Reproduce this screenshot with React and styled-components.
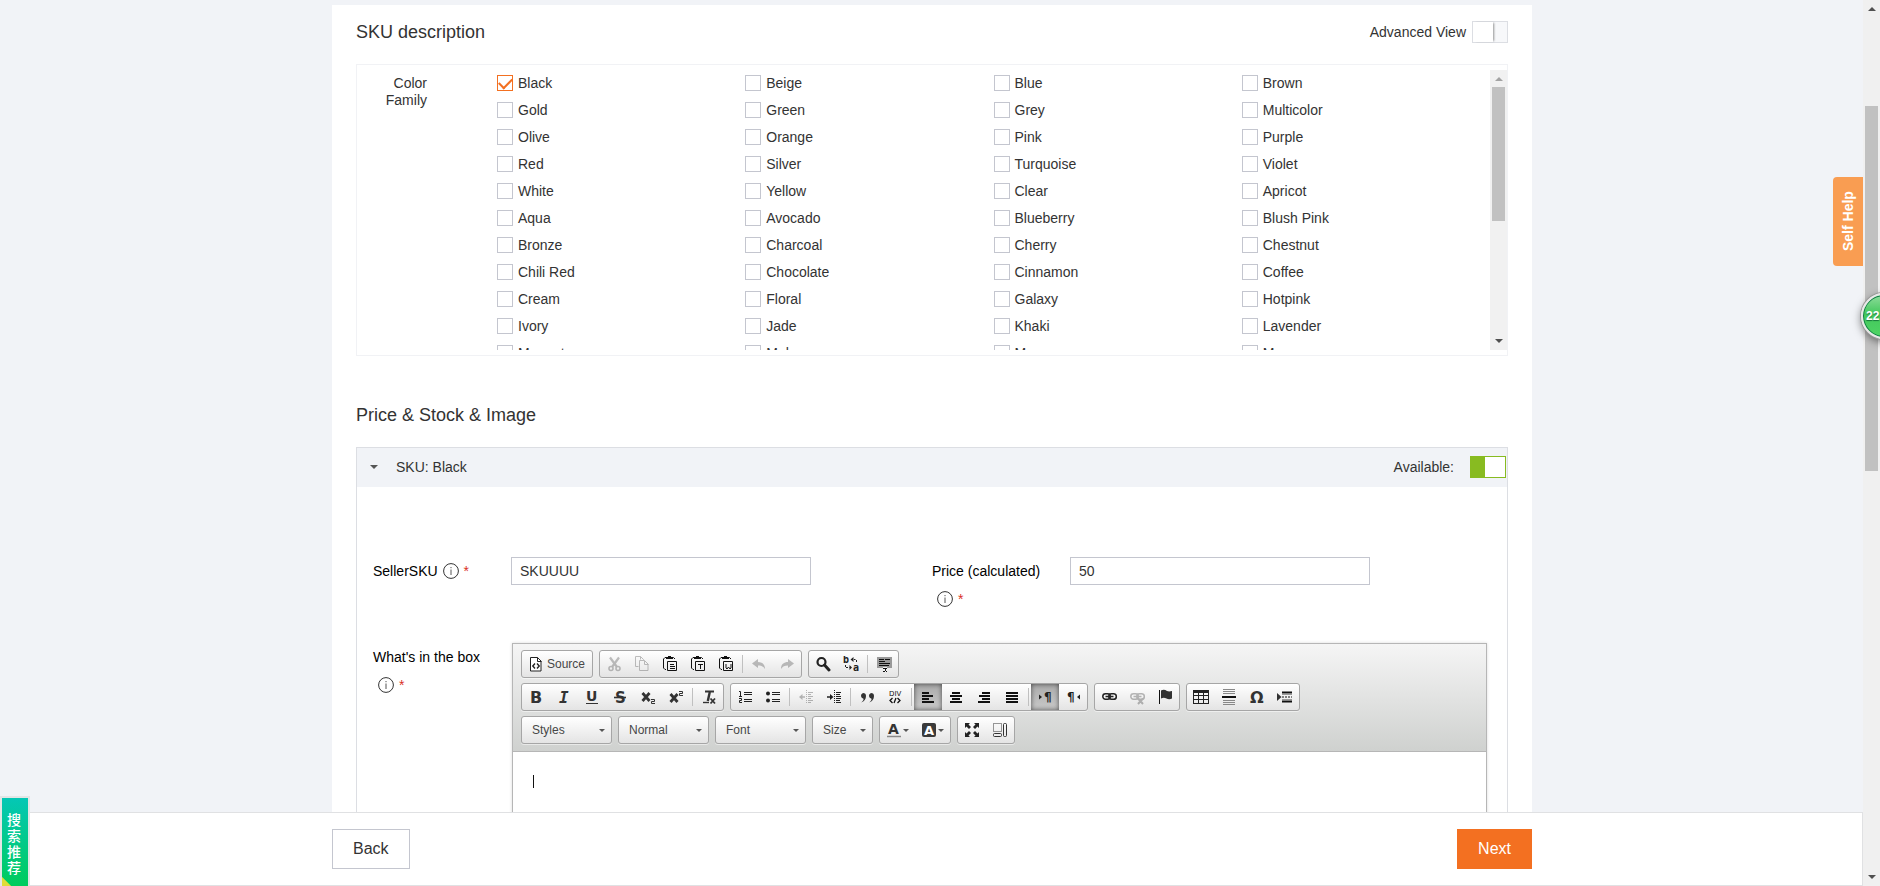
import React, { useState } from 'react';
import styled, { createGlobalStyle, css } from 'styled-components';

const colors = [
  'Black', 'Beige', 'Blue', 'Brown',
  'Gold', 'Green', 'Grey', 'Multicolor',
  'Olive', 'Orange', 'Pink', 'Purple',
  'Red', 'Silver', 'Turquoise', 'Violet',
  'White', 'Yellow', 'Clear', 'Apricot',
  'Aqua', 'Avocado', 'Blueberry', 'Blush Pink',
  'Bronze', 'Charcoal', 'Cherry', 'Chestnut',
  'Chili Red', 'Chocolate', 'Cinnamon', 'Coffee',
  'Cream', 'Floral', 'Galaxy', 'Hotpink',
  'Ivory', 'Jade', 'Khaki', 'Lavender',
  'Magenta', 'Mahogany', 'Mango', 'Maroon'
];

const sans = "'DejaVu Sans', sans-serif";
const mono = "'DejaVu Sans Mono', monospace";
const ink = '#333';

// 16 x 16 toolbar drawings
const icons = {
  source: (
    <>
      <path d="M2.500 1.500h7l3.500 3.500v10h-10.500v-13z" fill="#fff" stroke="#222" />
      <path d="M9.500 1.500v4h4" fill="none" stroke="#222" />
      <path d="M7 7.500 4.800 10 7 12.500M9 7.500 11.200 10 9 12.500" fill="none" stroke="#222" strokeWidth="1.400" />
    </>
  ),
  cut: (
    <g fill="none" stroke={ink}>
      <path d="M4 1.500 11 11M13 1.500 6 11" strokeWidth="2.200" />
      <circle cx="5" cy="12.500" r="2" strokeWidth="1.600" />
      <circle cx="12" cy="12.500" r="2" strokeWidth="1.600" />
    </g>
  ),
  copy: (
    <g fill="none" stroke={ink}>
      <path d="M4.500 10.500h-3v-10h5l3 3v1" />
      <path d="M5.500 4.500h5l3.500 3.500v6.500h-8.500z" />
      <path d="M10.500 4.500v4h4M6.500 .5v3" />
    </g>
  ),
  paste: (
    <>
      <Clipboard />
      <path d="M8 8.500h4M8 10.500h5M8 12.500h5" stroke="#111" />
    </>
  ),
  pasteText: (
    <>
      <Clipboard />
      <path d="M8 8.500h5M10.500 8v5" stroke="#111" />
    </>
  ),
  pasteWord: (
    <>
      <Clipboard />
      <path d="M8 8v4l1 1 1.500-2 1.500 2 1-1V8" stroke="#111" fill="none" />
    </>
  ),
  undo: <path d="M7 3v3c4 0 7 2 7 7-1.500-2.500-3.500-3.500-7-3.500V12L1 7.500z" fill={ink} />,
  redo: <path d="M9 3v3c-4 0-7 2-7 7 1.500-2.500 3.500-3.500 7-3.500V12l6-4.500z" fill={ink} />,
  find: (
    <g fill="none" stroke="#222">
      <circle cx="6.500" cy="6" r="4" strokeWidth="2.200" />
      <path d="m9.500 9 4.500 5" strokeWidth="3" strokeLinecap="round" />
    </g>
  ),
  replace: (
    <>
      <text x="0" y="7" fontFamily={mono} fontWeight="bold" fontSize="10" fill="#222">b</text>
      <text x="10" y="15" fontFamily={mono} fontWeight="bold" fontSize="10" fill="#222">a</text>
      <path d="M8 3.500h4.500M13.500 4v3M2.500 9v2.500h4" fill="none" stroke="#222" strokeDasharray="2 1" />
      <path d="m7.500 3.500 3-2.500v5zM9 11.500 6.500 9v5z" fill="#222" />
    </>
  ),
  selectAll: (
    <g shapeRendering="crispEdges">
      <path d="M1 1h15v11H1z" fill="#999" />
      <path d="M3 3h5M9 3h5M3 5h6M3 7h11M3 9h10" stroke="#111" transform="translate(0 .5)" />
      <path d="M7 11h4v5H7z" fill="#eee" />
      <path d="M7 12.500h1.500M9.500 12.500h1.500M9 12v3M7 15.500h1.500M9.500 15.500h1.500" stroke="#111" />
    </g>
  ),
  bold: <text x="2" y="14" fontFamily={sans} fontWeight="bold" fontSize="16" fill={ink}>B</text>,
  italic: <text x="3" y="14" fontFamily={mono} fontWeight="bold" fontStyle="italic" fontSize="16" fill={ink}>I</text>,
  underline: (
    <>
      <text x="2" y="12" fontFamily={sans} fontWeight="bold" fontSize="14" fill={ink}>U</text>
      <path d="M2 14.500h12" stroke={ink} />
    </>
  ),
  strike: (
    <>
      <text x="3" y="14" fontFamily={sans} fontWeight="bold" fontSize="15" fill={ink}>S</text>
      <path d="M2 8.500h12" stroke={ink} strokeWidth="1.600" />
    </>
  ),
  sub: (
    <>
      <path d="m2.500 4 7 8M9.500 4l-7 8" stroke={ink} strokeWidth="2.800" />
      <path d="M11 10.500h3.500v2h-3v2H15" fill="none" stroke={ink} />
    </>
  ),
  sup: (
    <>
      <path d="m2.500 5 7 8M9.500 5l-7 8" stroke={ink} strokeWidth="2.800" />
      <path d="M11 2.500h3.500v2h-3v2H15" fill="none" stroke={ink} />
    </>
  ),
  removeFormat: (
    <>
      <path d="M4 2.500h9" stroke={ink} strokeWidth="2" />
      <path d="m8.800 3-2 9" stroke={ink} strokeWidth="2.400" />
      <path d="M2 13.500h6" stroke={ink} strokeWidth="1.400" />
      <path d="m9.500 9.500 4.500 5M14 9.500l-4.500 5" stroke={ink} strokeWidth="1.800" />
    </>
  ),
  ordered: (
    <g stroke="#222" fill="none">
      <path d="M7 3.500h8M7 5.500h8M7 10.500h8M7 12.500h8" />
      <path d="M2 2.500h1.500V7M2 7.500h3M2 9.500h2.500v2h-2v2H5" />
    </g>
  ),
  bullets: (
    <>
      <path d="M7 3.500h8M7 5.500h8M7 10.500h8M7 12.500h8" stroke="#222" />
      <circle cx="3" cy="4.500" r="2" fill="#222" />
      <circle cx="3" cy="11.500" r="2" fill="#222" />
    </>
  ),
  outdent: (
    <>
      <path d="M8.500 1v14" stroke="#222" strokeDasharray="1 1" />
      <path d="M10 3.500h5M10 5.500h3M10 7.500h5M10 9.500h3M10 11.500h5M10 13.500h3" stroke="#222" />
      <path d="M3 8h4" stroke="#222" strokeWidth="1.500" />
      <path d="M1 8l3.500-3v6z" fill="#222" />
    </>
  ),
  indent: (
    <>
      <path d="M8.500 1v14" stroke="#222" strokeDasharray="1 1" />
      <path d="M10 3.500h5M10 5.500h4M10 7.500h5M10 9.500h5M10 11.500h4M10 13.500h5" stroke="#222" />
      <path d="M1 8h4" stroke="#222" strokeWidth="1.500" />
      <path d="M7.500 8 4 5v6z" fill="#222" />
    </>
  ),
  quote: (
    <g fill={ink}>
      <path d="M4 4a3 3 0 0 1 3 3c0 3.300-1.700 5.500-4.800 6.500C4 12 4.700 11 4.500 9.800A3 3 0 0 1 4 4z" />
      <path d="M12 4a3 3 0 0 1 3 3c0 3.300-1.700 5.500-4.800 6.500 1.800-1.500 2.500-2.500 2.300-3.700A3 3 0 0 1 12 4z" />
    </g>
  ),
  div: (
    <>
      <text x="2" y="7" fontFamily={sans} fontSize="7" fill="#111">DIV</text>
      <path d="M5.500 9 3 11.500 5.500 14M10.500 9l2.500 2.500-2.500 2.500M9 9l-2 5" fill="none" stroke="#111" strokeWidth="1.300" />
    </>
  ),
  left: <path d="M2 3h7M2 6h11M2 9h7M2 12h12" stroke="#111" strokeWidth="2" transform="translate(0 1)" />,
  center: <path d="M4 3h8M2 6h12M4 9h8M2 12h12" stroke="#111" strokeWidth="2" transform="translate(0 1)" />,
  right: <path d="M6 3h8M3 6h11M6 9h8M2 12h12" stroke="#111" strokeWidth="2" transform="translate(0 1)" />,
  justify: <path d="M2 3h12M2 6h12M2 9h12M2 12h12" stroke="#111" strokeWidth="2" transform="translate(0 1)" />,
  ltr: (
    <>
      <path d="m2 5.500 3 2.500-3 2.500z" fill="#222" />
      <text x="7" y="12" fontFamily={sans} fontWeight="bold" fontSize="12" fill="#222">¶</text>
    </>
  ),
  rtl: (
    <>
      <text x="2" y="12" fontFamily={sans} fontWeight="bold" fontSize="12" fill="#222">¶</text>
      <path d="M15 5.500 12 8l3 2.500z" fill="#222" />
    </>
  ),
  link: <Chain />,
  unlink: (
    <>
      <Chain />
      <path d="m9 9.500 5 5.500M14 9.500l-5 5.500" stroke="#222" strokeWidth="2" />
    </>
  ),
  flag: (
    <>
      <path d="M2.500 1v14" stroke="#111" />
      <path d="M4 1.500c2-1 4-1 6 .5 1.500.6 3 .5 5 0v7.500c-2 1-4 .8-5.500 0-2-1-3.500-1-5.500 0z" fill={ink} />
    </>
  ),
  table: (
    <g shapeRendering="crispEdges">
      <path d="M0 1h16v3H0z" fill="#222" />
      <path d="M.5 3v11.500h15V3M5.500 4v10M10.500 4v10M1 6.500h15M1 10.500h15" fill="none" stroke="#222" />
    </g>
  ),
  rule: (
    <>
      <path d="M2 .5h12M2 2.500h12M2 4.500h12M2 11.500h12M2 13.500h12M2 15.500h12" stroke="#888" />
      <path d="M1 8h14" stroke="#111" strokeWidth="2" />
    </>
  ),
  omega: <text x="1" y="14" fontFamily={sans} fontWeight="bold" fontSize="16" fill="#333">Ω</text>,
  pageBreak: (
    <>
      <path d="m0 4 4.500 4L0 12z" fill={ink} />
      <path d="M5 3.500h10M5 12.500h10" stroke="#111" strokeWidth="2" />
      <path d="M5 5.500h10M5 10.500h10" stroke="#999" />
      <path d="M5 8h10" stroke="#111" strokeDasharray="2 1" />
    </>
  ),
  textColor: (
    <>
      <text x="2" y="12" fontFamily={sans} fontWeight="bold" fontSize="14" fill="#333">A</text>
      <path d="M1 14.500h14" stroke="#888" strokeWidth="1.500" />
    </>
  ),
  bgColor: (
    <>
      <rect x="1" y="1" width="14" height="14" rx="2" fill="#3a3a3a" />
      <text x="3" y="13" fontFamily={sans} fontWeight="bold" fontSize="13" fill="#fff">A</text>
    </>
  ),
  maximize: (
    <g fill="#222">
      <path d="M1 1h5L4.500 2.500l2.500 2.500-2 2-2.500-2.500L1 6zM15 1h-5l1.500 1.500L9 5l2 2 2.500-2.500L15 6zM1 15h5l-1.500-1.500L7 11 5 9l-2.500 2.500L1 10zM15 15h-5l1.500-1.500L9 11l2-2 2.500 2.500L15 10z" />
    </g>
  ),
  blocks: (
    <g fill="none" stroke="#333">
      <path d="M1.500 1.500h8v8h-8z" strokeDasharray="1 1" />
      <rect x="1.500" y="11.500" width="8" height="3" rx="1" />
      <rect x="11.500" y="1.500" width="3" height="13" rx="1" />
    </g>
  )
};

function Clipboard() {
  return (
    <g fill="none" stroke="#111">
      <path d="M4 1.500H3L1.500 3v9L3 13.500h1M10 1.500h1.500L13 3" />
      <path d="M4 2h7" strokeWidth="2" />
      <path d="M6 .5h3M5.500 5.500h9v9h-9z" />
    </g>
  );
}

function Chain() {
  return (
    <g fill="none" stroke="#222">
      <rect x="1.800" y="4.800" width="7.500" height="5.500" rx="2.700" strokeWidth="1.500" />
      <rect x="7.800" y="4.800" width="7.500" height="5.500" rx="2.700" strokeWidth="1.500" />
      <path d="M4.500 7.500h8" strokeWidth="1.500" />
    </g>
  );
}

const rowOne = [
  [{ icon: 'source', name: 'Source', text: 'Source' }],
  [
    { icon: 'cut', name: 'Cut', off: true },
    { icon: 'copy', name: 'Copy', off: true },
    { icon: 'paste', name: 'Paste' },
    { icon: 'pasteText', name: 'Paste as plain text' },
    { icon: 'pasteWord', name: 'Paste from Word' },
    null,
    { icon: 'undo', name: 'Undo', off: true },
    { icon: 'redo', name: 'Redo', off: true }
  ],
  [
    { icon: 'find', name: 'Find' },
    { icon: 'replace', name: 'Replace' },
    null,
    { icon: 'selectAll', name: 'Select All' }
  ]
];

const rowTwo = [
  [
    { icon: 'bold', name: 'Bold' },
    { icon: 'italic', name: 'Italic' },
    { icon: 'underline', name: 'Underline' },
    { icon: 'strike', name: 'Strikethrough' },
    { icon: 'sub', name: 'Subscript' },
    { icon: 'sup', name: 'Superscript' },
    null,
    { icon: 'removeFormat', name: 'Remove Format' }
  ],
  [
    { icon: 'ordered', name: 'Numbered List' },
    { icon: 'bullets', name: 'Bulleted List' },
    null,
    { icon: 'outdent', name: 'Decrease Indent', off: true },
    { icon: 'indent', name: 'Increase Indent' },
    null,
    { icon: 'quote', name: 'Block Quote' },
    { icon: 'div', name: 'Create Div Container' },
    null,
    { icon: 'left', name: 'Align Left', on: true },
    { icon: 'center', name: 'Center' },
    { icon: 'right', name: 'Align Right' },
    { icon: 'justify', name: 'Justify' },
    null,
    { icon: 'ltr', name: 'Left to right', on: true },
    { icon: 'rtl', name: 'Right to left' }
  ],
  [
    { icon: 'link', name: 'Link' },
    { icon: 'unlink', name: 'Unlink', off: true },
    { icon: 'flag', name: 'Anchor' }
  ],
  [
    { icon: 'table', name: 'Table' },
    { icon: 'rule', name: 'Horizontal Line' },
    { icon: 'omega', name: 'Special Character' },
    { icon: 'pageBreak', name: 'Page Break' }
  ]
];

const rowThree = [
  [
    { icon: 'textColor', name: 'Text Color', menu: true },
    { icon: 'bgColor', name: 'Background Color', menu: true }
  ],
  [
    { icon: 'maximize', name: 'Maximize' },
    { icon: 'blocks', name: 'Show Blocks' }
  ]
];

const Tools = ({ groups }) =>
  groups.map((group, i) => (
    <ToolGroup key={i}>
      {group.map((tool, j) =>
        tool ? (
          <ToolButton key={tool.name} type="button" aria-label={tool.name} disabled={tool.off} $on={tool.on}>
            <svg width="16" height="16" viewBox="0 0 16 16" aria-hidden="true">{icons[tool.icon]}</svg>
            {tool.text && <span>{tool.text}</span>}
            {tool.menu && <Caret $size={3} />}
          </ToolButton>
        ) : (
          <Separator key={j} />
        )
      )}
    </ToolGroup>
  ));

const Combo = ({ label, short }) => (
  <ComboBox $short={short}>
    <select aria-label={label} defaultValue={label}>
      <option>{label}</option>
    </select>
    <Caret $size={3} />
  </ComboBox>
);

const Hint = () => (
  <HintMark>
    <svg width="16" height="16" viewBox="0 0 16 16" aria-hidden="true">
      <circle cx="8" cy="8" r="7.400" fill="none" stroke="#333" />
      <path d="M8 6.500v5.500" stroke="#555" />
      <path d="M8 4v1.200" stroke="#555" />
    </svg>
    <em>*</em>
  </HintMark>
);

const App = () => {
  const [picked, setPicked] = useState(['Black']);
  const [advanced, setAdvanced] = useState(false);
  const [available, setAvailable] = useState(true);

  const pick = color =>
    setPicked(picked.includes(color) ? picked.filter(c => c !== color) : [...picked, color]);

  return (
    <Shell>
      <GlobalStyle />
      <Main>
        <Content>
          <Sheet>
            <TitleRow>
              <h2>SKU description</h2>
              <label>
                Advanced View
                <Toggle checked={advanced} onChange={() => setAdvanced(!advanced)} />
              </label>
            </TitleRow>

            <ColorBox>
              <ColorLabel>Color Family</ColorLabel>
              <ColorList>
                {colors.map(color => (
                  <label key={color}>
                    <Check checked={picked.includes(color)} onChange={() => pick(color)} />
                    {color}
                  </label>
                ))}
              </ColorList>
              <Track>
                <Arrow $up $color="#a3a3a3" />
                <Thumb $height="134px" />
                <Arrow $color="#505050" />
              </Track>
            </ColorBox>

            <SectionTitle>Price &amp; Stock &amp; Image</SectionTitle>

            <Panel>
              <PanelHead>
                <Caret $size={4} />
                <span>SKU: Black</span>
                <label>
                  Available:
                  <Toggle checked={available} onChange={() => setAvailable(!available)} />
                </label>
              </PanelHead>
              <PanelBody>
                <Field>
                  <FieldLabel htmlFor="seller-sku"><span>SellerSKU</span><Hint /></FieldLabel>
                  <TextInput id="seller-sku" defaultValue="SKUUUU" />
                </Field>
                <Field>
                  <FieldLabel htmlFor="price"><span>Price (calculated)</span><Hint /></FieldLabel>
                  <TextInput id="price" defaultValue="50" />
                </Field>
                <Field $wide>
                  <FieldLabel as="div" id="box-label"><span>What's in the box</span><Hint /></FieldLabel>
                  <Editor>
                    <Toolbar>
                      <ToolRow><Tools groups={rowOne} /></ToolRow>
                      <ToolRow><Tools groups={rowTwo} /></ToolRow>
                      <ToolRow>
                        <Combo label="Styles" />
                        <Combo label="Normal" />
                        <Combo label="Font" />
                        <Combo label="Size" short />
                        <Tools groups={rowThree} />
                      </ToolRow>
                    </Toolbar>
                    <Writing role="textbox" aria-multiline="true" aria-labelledby="box-label" tabIndex={0}>
                      <Cursor />
                    </Writing>
                  </Editor>
                </Field>
              </PanelBody>
            </Panel>
          </Sheet>
        </Content>

        <Footer>
          <FooterInner>
            <FooterButton type="button">Back</FooterButton>
            <FooterButton type="button" $primary>Next</FooterButton>
          </FooterInner>
        </Footer>
      </Main>

      <PageTrack>
        <Arrow $up $color="#505050" />
        <Thumb $height="365px" $offset="89px" />
        <Arrow $color="#505050" />
      </PageTrack>

      <SelfHelp type="button">Self Help</SelfHelp>
      <Counter>22</Counter>
      <SideTab type="button">搜索推荐</SideTab>
    </Shell>
  );
};

const GlobalStyle = createGlobalStyle`
  * {
    box-sizing: border-box;
  }
  body {
    margin: 0;
    color: #333;
    font: 14px/17px 'Liberation Sans', Arial, sans-serif;
  }
  h2 {
    margin: 0;
    font-size: 18px;
    font-weight: normal;
    line-height: 22px;
  }
  button, input, select {
    margin: 0;
    color: inherit;
    font: inherit;
  }
`;

const Shell = styled.div`
  display: flex;
  position: relative;
  height: 100vh;
  overflow: hidden;
  background: #f1f3f7;
`;

const Main = styled.main`
  display: flex;
  flex: 1;
  flex-direction: column;
  min-width: 0;
`;

const Content = styled.div`
  flex: 1;
  min-height: 0;
  overflow: hidden;
  padding: 5px 0 0 1px;
`;

const Sheet = styled.div`
  width: 100%;
  max-width: 1200px;
  margin: 0 auto;
  padding: 16px 24px;
  background: #fff;
`;

const TitleRow = styled.div`
  display: flex;
  align-items: center;
  justify-content: space-between;
  label {
    display: flex;
    align-items: center;
    gap: 6px;
  }
`;

const Toggle = styled.input.attrs({ type: 'checkbox', role: 'switch' })`
  appearance: none;
  display: flex;
  width: 36px;
  height: 22px;
  border: 1px solid #dcdee3;
  background: #f7f8fa;
  &::before {
    content: '';
    width: 20px;
    background: #fff;
    box-shadow: 2px 0 2px -1px rgba(0, 0, 0, 0.4);
  }
  &:checked {
    justify-content: flex-end;
    border-color: #88bb21;
    background: #88bb21;
  }
  &:checked::before {
    box-shadow: none;
  }
`;

const ColorBox = styled.section`
  display: flex;
  height: 292px;
  margin-top: 21px;
  padding: 5px 0;
  border: 1px solid #f1f2f5;
`;

const ColorLabel = styled.div`
  width: 70px;
  margin-right: 70px;
  padding: 5px 0 0 20px;
  text-align: right;
`;

const ColorList = styled.div`
  display: grid;
  flex: 1;
  grid-template-columns: repeat(4, 1fr);
  grid-auto-rows: 27px;
  overflow: hidden;
  label {
    display: flex;
    align-items: flex-start;
    gap: 5px;
    padding-top: 5px;
  }
`;

const Check = styled.input.attrs({ type: 'checkbox' })`
  appearance: none;
  display: flex;
  justify-content: center;
  width: 16px;
  height: 16px;
  border: 1px solid #c4c6cf;
  background: #fff;
  &:checked {
    border-color: #f37021;
  }
  &:checked::before {
    content: '';
    width: 11px;
    height: 6px;
    margin-top: 2px;
    border: solid #f37021;
    border-width: 0 0 2px 2px;
    transform: rotate(-45deg);
  }
`;

const Track = styled.div`
  display: flex;
  flex-direction: column;
  align-items: center;
  width: 17px;
  background: #f1f1f1;
`;

const PageTrack = styled(Track)`
  background: #f0f0f0;
`;

const Arrow = styled.i`
  margin: 7px 0 6px;
  border: solid transparent;
  border-width: ${p => (p.$up ? '0 4px 4px' : '4px 4px 0')};
  border-${p => (p.$up ? 'bottom' : 'top')}-color: ${p => p.$color};
  &:last-child {
    margin-top: auto;
    margin-bottom: 7px;
  }
`;

const Thumb = styled.div`
  width: 13px;
  height: ${p => p.$height};
  margin-top: ${p => p.$offset || 0};
  background: #c1c1c1;
`;

const SectionTitle = styled.h2`
  margin: 48px 0 21px;
`;

const Panel = styled.section`
  border: 1px solid #dcdee3;
`;

const PanelHead = styled.header`
  display: flex;
  align-items: center;
  height: 39px;
  padding: 0 1px 1px 13px;
  background: #f1f3f7;
  span {
    margin-left: 18px;
  }
  label {
    display: flex;
    align-items: center;
    gap: 16px;
    margin-left: auto;
  }
`;

const Caret = styled.i`
  border: solid transparent;
  border-width: ${p => p.$size}px ${p => p.$size}px 0;
  border-top-color: #555;
  pointer-events: none;
`;

const PanelBody = styled.div`
  display: grid;
  grid-template-columns: 1fr 1fr;
  row-gap: 30px;
  padding: 70px 16px 24px;
`;

const Field = styled.div`
  display: flex;
  align-items: flex-start;
  ${p => p.$wide && css`
    grid-column: 1 / -1;
  `}
`;

const FieldLabel = styled.label`
  display: flex;
  flex-wrap: wrap;
  width: 138px;
  padding-right: 20px;
  color: #000;
  line-height: 28px;
`;

const HintMark = styled.span`
  display: flex;
  align-items: center;
  gap: 5px;
  height: 28px;
  margin-left: 5px;
  em {
    color: #d93026;
    font-style: normal;
  }
`;

const TextInput = styled.input`
  width: 300px;
  height: 28px;
  padding: 0 8px;
  border: 1px solid #c4c6cf;
  background: #fff;
`;

const Editor = styled.div`
  flex: 1;
  margin: 0 4px 0 1px;
  border: 1px solid #b6b6b6;
  box-shadow: 0 0 3px rgba(0, 0, 0, 0.15);
`;

const Toolbar = styled.div`
  display: flex;
  flex-direction: column;
  gap: 5px;
  padding: 6px 8px 7px;
  border-bottom: 1px solid #b6b6b6;
  background: linear-gradient(#f5f5f5, #cfd1cf);
  color: #474747;
  font-size: 12px;
`;

const ToolRow = styled.div`
  display: flex;
  gap: 6px;
`;

const boxed = css`
  height: 28px;
  border: 1px solid #a6a6a6;
  border-radius: 3px;
  background: linear-gradient(#fff, #e4e4e4);
  box-shadow: 0 1px 0 rgba(255, 255, 255, 0.5);
`;

const ToolGroup = styled.div`
  display: flex;
  align-items: center;
  ${boxed}
`;

const ToolButton = styled.button`
  display: flex;
  align-items: center;
  height: 26px;
  padding: 0 6px;
  border: 0;
  background: none;
  svg {
    flex: none;
  }
  span {
    width: 39px;
    margin-left: 3px;
    text-align: left;
  }
  i {
    margin-left: 1px;
  }
  &:disabled svg {
    opacity: 0.3;
  }
  ${p => p.$on && css`
    background: linear-gradient(#aaa, #cacaca);
    box-shadow: inset 0 0 5px rgba(0, 0, 0, 0.6);
  `}
`;

const Separator = styled.span`
  width: 1px;
  height: 18px;
  margin: 0 2px;
  background: #c0c0c0;
`;

const ComboBox = styled.span`
  display: grid;
  align-items: center;
  width: ${p => (p.$short ? 61 : 91)}px;
  ${boxed}
  select, i {
    grid-area: 1 / 1;
  }
  select {
    appearance: none;
    width: 100%;
    height: 26px;
    padding: 0 10px;
    border: 0;
    background: none;
  }
  i {
    justify-self: end;
    margin-right: 6px;
  }
`;

const Writing = styled.div`
  min-height: 200px;
  padding: 23px 20px;
  background: #fff;
`;

const Cursor = styled.span`
  display: block;
  width: 1px;
  height: 13px;
  background: #111;
`;

const Footer = styled.footer`
  height: 74px;
  padding: 16px 0 0 2px;
  border: 1px solid #e0e1e3;
  border-left: 0;
  background: #fff;
`;

const FooterInner = styled.div`
  display: flex;
  justify-content: space-between;
  max-width: 1200px;
  margin: 0 auto;
`;

const FooterButton = styled.button`
  height: 40px;
  padding: 0 20px 2px;
  border: 1px solid ${p => (p.$primary ? '#f37021' : '#c4c6cf')};
  background: ${p => (p.$primary ? '#f37021' : '#fff')};
  color: ${p => (p.$primary ? '#fff' : '#333')};
  font-size: 16px;
`;

const SelfHelp = styled.button`
  position: absolute;
  top: 177px;
  right: 17px;
  width: 30px;
  height: 89px;
  padding: 0;
  border: 0;
  border-radius: 0 4px 4px 0;
  background: #f99d52;
  color: #fff;
  font-weight: bold;
  writing-mode: vertical-rl;
  transform: rotate(180deg);
`;

const Counter = styled.div`
  position: absolute;
  top: 293px;
  right: -27px;
  width: 46px;
  height: 46px;
  padding-left: 3px;
  border: 2px solid #e8e8e8;
  border-radius: 50%;
  background: linear-gradient(#8fdc9c, #43c85c 45%, #4fd464);
  box-shadow: 0 0 0 1px #999, inset 0 0 0 1px #0f7a45, 0 3px 8px rgba(0, 0, 0, 0.5);
  color: #fff;
  font-size: 12px;
  font-weight: bold;
  line-height: 42px;
  text-shadow: 0 1px 1px #14733a;
`;

const SideTab = styled.button`
  position: absolute;
  bottom: 0;
  left: 0;
  width: 30px;
  height: 90px;
  padding: 2px 6px 0 4px;
  border: solid #e3e5e5;
  border-width: 2px 2px 0;
  background:
    linear-gradient(45deg, #dfdc35 6px, transparent 7px),
    linear-gradient(#04c7b5, #00cc5c);
  color: #fff;
  font: 500 14px/16px 'Noto Sans CJK SC', sans-serif;
`;

export default App;
